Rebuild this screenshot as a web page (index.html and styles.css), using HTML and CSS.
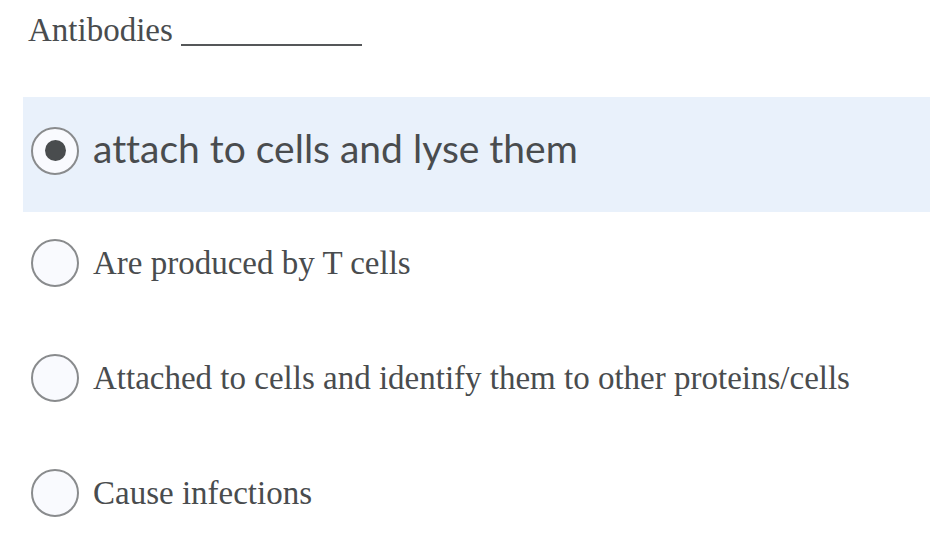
FILE: index.html
```html
<!DOCTYPE html>
<html>
<head>
<meta charset="utf-8">
<link rel="stylesheet" href="styles.css">
</head>
<body>
<div class="quiz">
  <div class="question">Antibodies <span class="blank"></span></div>
  <div class="options">
    <label class="option selected">
      <span class="radio"><span class="dot"></span></span>
      <span class="label sans">attach to cells and lyse them</span>
    </label>
    <label class="option">
      <span class="radio"></span>
      <span class="label">Are produced by T cells</span>
    </label>
    <label class="option">
      <span class="radio"></span>
      <span class="label">Attached to cells and identify them to other proteins/cells</span>
    </label>
    <label class="option">
      <span class="radio"></span>
      <span class="label">Cause infections</span>
    </label>
  </div>
</div>
</body>
</html>
```

FILE: styles.css
```css
html, body {
  margin: 0;
  padding: 0;
  background: #ffffff;
}
body {
  width: 930px;
  height: 558px;
  overflow: hidden;
  color: #494c4e;
  font-family: "Liberation Serif", "Times New Roman", serif;
}
.quiz {
  padding-left: 23px;
}
.question {
  font-size: 33px;
  line-height: 36px;
  padding-top: 12px;
  padding-left: 5px;
  height: 97px;
  box-sizing: border-box;
  display: flex;
  align-items: baseline;
}
.blank {
  display: inline-block;
  width: 181px;
  height: 2px;
  background: #555759;
  margin-left: 8px;
  position: relative;
  top: 5px;
}
.options {
  display: flex;
  flex-direction: column;
}
.option {
  display: flex;
  align-items: center;
  height: 115px;
  padding-left: 8px;
  box-sizing: border-box;
}
.option.selected {
  background: #e9f1fb;
  padding-bottom: 8px;
}
.option:not(.selected) {
  padding-bottom: 14px;
}
.radio {
  flex: none;
  width: 48px;
  height: 48px;
  border-radius: 50%;
  border: 2px solid #898b8d;
  background: #f9fafe;
  box-sizing: border-box;
  display: flex;
  align-items: center;
  justify-content: center;
  margin-right: 14px;
}
.dot {
  width: 21px;
  height: 21px;
  border-radius: 50%;
  background: #494c4e;
}
.label {
  font-size: 33px;
  line-height: 40px;
}
.label.sans {
  font-family: Lato, "Noto Sans", sans-serif;
  font-size: 39px;
  font-variant-ligatures: none;
  position: relative;
  top: -3px;
}
```
